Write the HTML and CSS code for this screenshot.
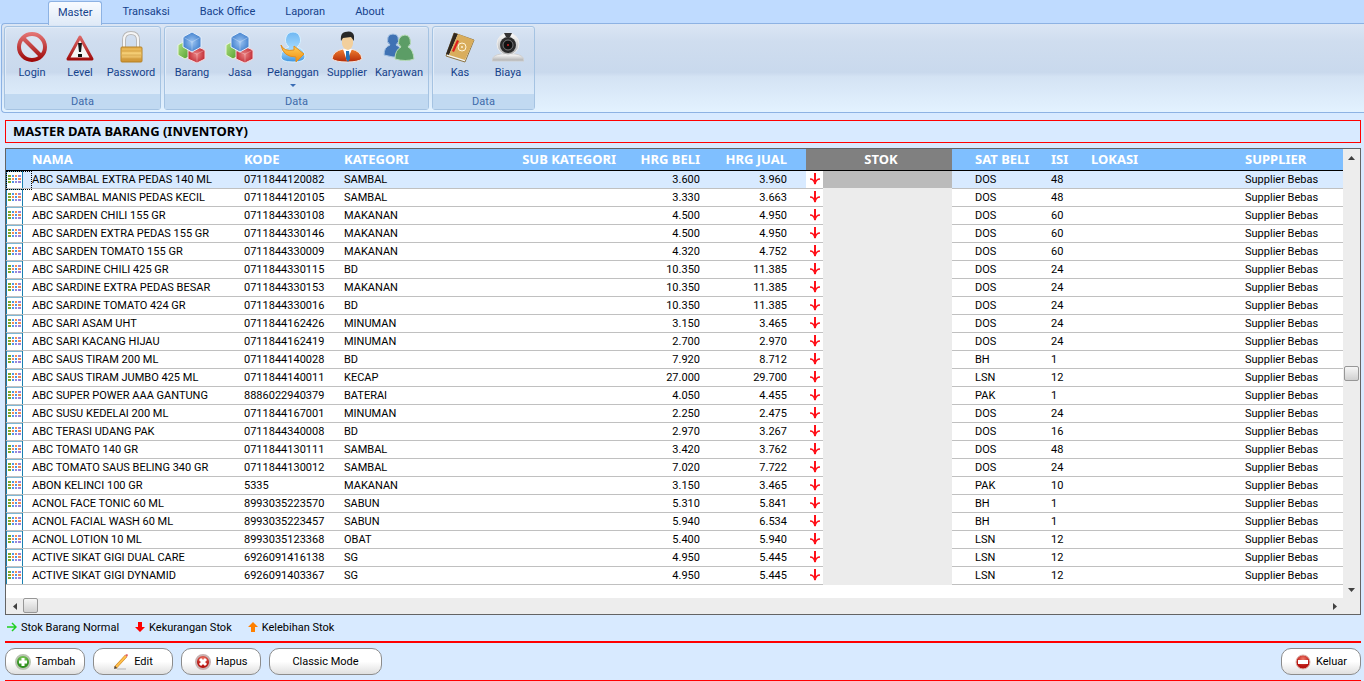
FILE: index.html
```html
<!DOCTYPE html>
<html lang="id">
  <head>
    <meta charset="utf-8">
    <meta name="viewport" content="width=device-width, initial-scale=1.0">
    <title>Master Data Barang</title>
    <link rel="stylesheet" href="styles.css">
  </head>
  <body>
    <!-- Shared icons -->
    <svg class="sprite" aria-hidden="true">
      <defs>
        <linearGradient id="red" gradientUnits="userSpaceOnUse" x1="0" y1="0" x2="0" y2="32"><stop offset="0" stop-color="#e87c7c"/><stop offset="1" stop-color="#980000"/></linearGradient>
        <linearGradient id="gold" x1="0" y1="0" x2="0" y2="1"><stop offset="0" stop-color="#e3ab45"/><stop offset=".5" stop-color="#f6d27c"/><stop offset="1" stop-color="#c98a28"/></linearGradient>
        <radialGradient id="blueHex"><stop offset="0" stop-color="#9cc4f2"/><stop offset="1" stop-color="#4583cf"/></radialGradient>
        <radialGradient id="redHex"><stop offset="0" stop-color="#ea8080"/><stop offset="1" stop-color="#c22f38"/></radialGradient>
        <linearGradient id="greenHex" x1="0" y1="0" x2="1" y2="1"><stop offset="0" stop-color="#b4e284"/><stop offset="1" stop-color="#4f9e2c"/></linearGradient>
        <linearGradient id="sky" x1="0" y1="0" x2="0" y2="1"><stop offset="0" stop-color="#6fb7f2"/><stop offset=".6" stop-color="#a5dbff"/><stop offset="1" stop-color="#3f94de"/></linearGradient>
        <linearGradient id="orange" x1="0" y1="0" x2="0" y2="1"><stop offset="0" stop-color="#ffd35a"/><stop offset="1" stop-color="#f08c10"/></linearGradient>
        <linearGradient id="shirt" x1="0" y1="0" x2="0" y2="1"><stop offset="0" stop-color="#f08030"/><stop offset="1" stop-color="#b42a08"/></linearGradient>
        <linearGradient id="silver" x1="0" y1="0" x2="0" y2="1"><stop offset="0" stop-color="#ffffff"/><stop offset="1" stop-color="#aaaaaa"/></linearGradient>
        <radialGradient id="greenBall" cy=".3"><stop offset="0" stop-color="#8bd466"/><stop offset="1" stop-color="#2d8f1c"/></radialGradient>
        <radialGradient id="redBall" cy=".3"><stop offset="0" stop-color="#f07a6a"/><stop offset="1" stop-color="#b81410"/></radialGradient>
      </defs>
      <symbol id="cubes" viewBox="0 0 32 32">
        <path d="M2 14l7-4 5 3v12l-5 3-7-4z" fill="url(#greenHex)" stroke="#e8f6dc"/>
        <path d="M20 15l9 4v9l-8 4-9-4v-9z" fill="url(#redHex)" stroke="#f4dce0"/>
        <path d="M16 1l9 5v10l-9 5-9-5V6z" fill="url(#blueHex)" stroke="#e4effc"/>
        <path d="M7 6l9 5 9-5M16 11v10M12 20l9 3 8-4M21 23v8" fill="none" stroke="#ffffff" stroke-opacity=".3"/>
      </symbol>
      <symbol id="row-icon" viewBox="0 0 17 17">
        <path d="M0 0h17v17H0z" fill="#ffffff"/>
        <path d="M0 0h1v17H0zM16 0h1v17h-1z" fill="#1a80b0"/>
        <path d="M1 0h15v1H1z" fill="#7fb8d4"/>
        <path d="M2 4h3v2H2zM2 7h3v2H2zM2 10h3v2H2z" fill="#7fa82c"/>
        <path d="M6 4h2v2H6zM9 7h2v2H9zM6 10h2v2H6z" fill="#4b97e8"/>
        <path d="M9 4h2v2H9zM6 7h2v2H6zM12 7h3v2h-3z" fill="#f58a54"/>
        <path d="M12 4h3v2h-3zM9 10h2v2H9zM12 10h3v2h-3z" fill="#9a84dc"/>
      </symbol>
      <symbol id="down" viewBox="0 0 12 12">
        <path d="M6 0v11" stroke="#ff1018" stroke-width="2"/>
        <path d="M1 6q4 0 5 5 1-5 5-5" fill="none" stroke="#ff1018" stroke-width="1.5"/>
      </symbol>
    </svg>

    <nav class="tabs">
      <a class="tab active" href="#master">Master</a>
      <a class="tab" href="#transaksi">Transaksi</a>
      <a class="tab" href="#backoffice">Back Office</a>
      <a class="tab" href="#laporan">Laporan</a>
      <a class="tab" href="#about">About</a>
    </nav>

    <div class="ribbon">
      <section class="group">
        <div class="tools">
          <button class="tool">
            <svg viewBox="0 0 32 32"><circle cx="16" cy="16" r="13" fill="#ffffff" fill-opacity=".2" stroke="url(#red)" stroke-width="4"/><path d="M7 7l18 18" stroke="url(#red)" stroke-width="4"/></svg>
            Login
          </button>
          <button class="tool">
            <svg viewBox="0 0 32 32"><path d="M16 6L28 28H4z" fill="#f4f4f4" stroke="url(#red)" stroke-width="3" stroke-linejoin="round"/><path d="M14 12h4l-1 9h-2zM14 23h4v3h-4z" fill="#111111"/></svg>
            Level
          </button>
          <button class="tool wide">
            <svg viewBox="0 0 32 32"><path d="M9 17V9q0-7 7-7t7 7v8" fill="none" stroke="#b8b8b8" stroke-width="4"/><path d="M9 17V9q0-7 7-7t7 7v8" fill="none" stroke="#f6f6f6" stroke-width="2"/><rect x="6" y="16" width="21" height="15" rx="1" fill="url(#gold)" stroke="#b88428"/><path d="M7 20h19M7 24h19M7 28h19" stroke="#c48c2c" stroke-opacity=".6"/></svg>
            Password
          </button>
        </div>
        <h2>Data</h2>
      </section>

      <section class="group">
        <div class="tools">
          <button class="tool"><svg><use href="#cubes"/></svg>Barang</button>
          <button class="tool"><svg><use href="#cubes"/></svg>Jasa</button>
          <button class="tool wider">
            <svg viewBox="0 0 32 32"><path d="M4 26q0-8 8-10-5-4-3-10 2-5 7-5t7 5q2 6-3 10 8 2 8 10 0 5-12 5T4 26z" fill="url(#sky)" stroke="#d8f0ff"/><path d="M4 14q3 7 13 5v-4l10 8-8 8v-5Q6 26 4 14z" fill="url(#orange)" stroke="#e49020"/></svg>
            Pelanggan
            <span class="caret"></span>
          </button>
          <button class="tool medium">
            <svg viewBox="0 0 32 32"><path d="M1 28q1-8 11-10h8q10 2 11 10-4 3-15 3T1 28z" fill="url(#shirt)" stroke="#f4e4dc"/><path d="M12 18l4 12 5-12z" fill="#ffffff"/><path d="M15 20h3l1 8-2 3-2-3z" fill="#2472b8"/><path d="M11 6h11v7q-1 5-5 6-5-1-6-6z" fill="#f2cf9c"/><path d="M10 10q-1-8 4-9 8-2 9 4v5l-3-4-8 1z" fill="#282828"/></svg>
            Supplier
          </button>
          <button class="tool wide">
            <svg viewBox="0 0 32 32"><path d="M1 24q0-8 6-10-4-3-2-8 1-3 5-3t5 3q2 5-2 8 6 2 6 12-9 1-18-2z" fill="#3f72b4" stroke="#a8c4e4"/><path d="M12 28q0-9 6-12-4-3-2-8 2-4 6-4t5 4q2 5-2 8 5 2 6 12-8 3-19 0z" fill="#5c9d66" stroke="#b8dcb8"/></svg>
            Karyawan
          </button>
        </div>
        <h2>Data</h2>
      </section>

      <section class="group">
        <div class="tools">
          <button class="tool">
            <svg viewBox="0 0 32 32"><path d="M10 2l20 7-9 22L2 25z" fill="#f4f4ee" stroke="#8c7444"/><path d="M10 2l4 1-9 21-3-1z" fill="#302820"/><path d="M14 3l16 6-9 20L5 24z" fill="#d9ad5c"/><path d="M13 9l2 1-5 11-2-1z" fill="#e02020"/><circle cx="18" cy="16" r="4" fill="none" stroke="#fff4d8"/><circle cx="18" cy="16" r="1" fill="#fff4d8"/></svg>
            Kas
          </button>
          <button class="tool">
            <svg viewBox="0 0 32 32"><path d="M0 30q0-6 9-7h14q9 1 9 7z" fill="url(#silver)" stroke="#d0d0d0"/><circle cx="16" cy="13" r="11" fill="url(#silver)" stroke="#eeeeee"/><path d="M12 2h8l-2 4h-4z" fill="#333333"/><circle cx="16" cy="14" r="8" fill="#2c2c2c"/><circle cx="16" cy="14" r="5" fill="#111111" stroke="#777777"/><circle cx="16" cy="14" r="1" fill="#cc2020"/></svg>
            Biaya
          </button>
        </div>
        <h2>Data</h2>
      </section>
    </div>

    <main>
      <h1>MASTER DATA BARANG (INVENTORY)</h1>

      <div class="grid">
        <div class="rows">
          <table>
            <colgroup>
              <col class="c-icon"><col class="c-nama"><col class="c-kode"><col class="c-kategori"><col class="c-sub"><col class="c-beli"><col class="c-jual"><col class="c-arrow"><col class="c-stok"><col class="c-sat"><col class="c-isi"><col class="c-lokasi"><col>
            </colgroup>
            <thead>
              <tr>
                <th></th><th>NAMA</th><th>KODE</th><th>KATEGORI</th><th class="num">SUB KATEGORI</th><th class="num">HRG BELI</th><th class="num jual">HRG JUAL</th><th class="stok" colspan="2">STOK</th><th class="sat">SAT BELI</th><th>ISI</th><th>LOKASI</th><th>SUPPLIER</th>
              </tr>
            </thead>
            <tbody>
              <tr class="selected"><td class="mark"><svg><use href="#row-icon"/></svg></td><td>ABC SAMBAL EXTRA PEDAS 140 ML</td><td>0711844120082</td><td>SAMBAL</td><td></td><td class="num">3.600</td><td class="num jual">3.960</td><td class="arrow"><svg><use href="#down"/></svg></td><td class="stok"></td><td class="sat">DOS</td><td>48</td><td></td><td>Supplier Bebas</td></tr>
              <tr><td class="mark"><svg><use href="#row-icon"/></svg></td><td>ABC SAMBAL MANIS PEDAS KECIL</td><td>0711844120105</td><td>SAMBAL</td><td></td><td class="num">3.330</td><td class="num jual">3.663</td><td class="arrow"><svg><use href="#down"/></svg></td><td class="stok"></td><td class="sat">DOS</td><td>48</td><td></td><td>Supplier Bebas</td></tr>
              <tr><td class="mark"><svg><use href="#row-icon"/></svg></td><td>ABC SARDEN CHILI 155 GR</td><td>0711844330108</td><td>MAKANAN</td><td></td><td class="num">4.500</td><td class="num jual">4.950</td><td class="arrow"><svg><use href="#down"/></svg></td><td class="stok"></td><td class="sat">DOS</td><td>60</td><td></td><td>Supplier Bebas</td></tr>
              <tr><td class="mark"><svg><use href="#row-icon"/></svg></td><td>ABC SARDEN EXTRA PEDAS 155 GR</td><td>0711844330146</td><td>MAKANAN</td><td></td><td class="num">4.500</td><td class="num jual">4.950</td><td class="arrow"><svg><use href="#down"/></svg></td><td class="stok"></td><td class="sat">DOS</td><td>60</td><td></td><td>Supplier Bebas</td></tr>
              <tr><td class="mark"><svg><use href="#row-icon"/></svg></td><td>ABC SARDEN TOMATO 155 GR</td><td>0711844330009</td><td>MAKANAN</td><td></td><td class="num">4.320</td><td class="num jual">4.752</td><td class="arrow"><svg><use href="#down"/></svg></td><td class="stok"></td><td class="sat">DOS</td><td>60</td><td></td><td>Supplier Bebas</td></tr>
              <tr><td class="mark"><svg><use href="#row-icon"/></svg></td><td>ABC SARDINE CHILI 425 GR</td><td>0711844330115</td><td>BD</td><td></td><td class="num">10.350</td><td class="num jual">11.385</td><td class="arrow"><svg><use href="#down"/></svg></td><td class="stok"></td><td class="sat">DOS</td><td>24</td><td></td><td>Supplier Bebas</td></tr>
              <tr><td class="mark"><svg><use href="#row-icon"/></svg></td><td>ABC SARDINE EXTRA PEDAS BESAR</td><td>0711844330153</td><td>MAKANAN</td><td></td><td class="num">10.350</td><td class="num jual">11.385</td><td class="arrow"><svg><use href="#down"/></svg></td><td class="stok"></td><td class="sat">DOS</td><td>24</td><td></td><td>Supplier Bebas</td></tr>
              <tr><td class="mark"><svg><use href="#row-icon"/></svg></td><td>ABC SARDINE TOMATO 424 GR</td><td>0711844330016</td><td>BD</td><td></td><td class="num">10.350</td><td class="num jual">11.385</td><td class="arrow"><svg><use href="#down"/></svg></td><td class="stok"></td><td class="sat">DOS</td><td>24</td><td></td><td>Supplier Bebas</td></tr>
              <tr><td class="mark"><svg><use href="#row-icon"/></svg></td><td>ABC SARI ASAM UHT</td><td>0711844162426</td><td>MINUMAN</td><td></td><td class="num">3.150</td><td class="num jual">3.465</td><td class="arrow"><svg><use href="#down"/></svg></td><td class="stok"></td><td class="sat">DOS</td><td>24</td><td></td><td>Supplier Bebas</td></tr>
              <tr><td class="mark"><svg><use href="#row-icon"/></svg></td><td>ABC SARI KACANG HIJAU</td><td>0711844162419</td><td>MINUMAN</td><td></td><td class="num">2.700</td><td class="num jual">2.970</td><td class="arrow"><svg><use href="#down"/></svg></td><td class="stok"></td><td class="sat">DOS</td><td>24</td><td></td><td>Supplier Bebas</td></tr>
              <tr><td class="mark"><svg><use href="#row-icon"/></svg></td><td>ABC SAUS TIRAM 200 ML</td><td>0711844140028</td><td>BD</td><td></td><td class="num">7.920</td><td class="num jual">8.712</td><td class="arrow"><svg><use href="#down"/></svg></td><td class="stok"></td><td class="sat">BH</td><td>1</td><td></td><td>Supplier Bebas</td></tr>
              <tr><td class="mark"><svg><use href="#row-icon"/></svg></td><td>ABC SAUS TIRAM JUMBO 425 ML</td><td>0711844140011</td><td>KECAP</td><td></td><td class="num">27.000</td><td class="num jual">29.700</td><td class="arrow"><svg><use href="#down"/></svg></td><td class="stok"></td><td class="sat">LSN</td><td>12</td><td></td><td>Supplier Bebas</td></tr>
              <tr><td class="mark"><svg><use href="#row-icon"/></svg></td><td>ABC SUPER POWER AAA GANTUNG</td><td>8886022940379</td><td>BATERAI</td><td></td><td class="num">4.050</td><td class="num jual">4.455</td><td class="arrow"><svg><use href="#down"/></svg></td><td class="stok"></td><td class="sat">PAK</td><td>1</td><td></td><td>Supplier Bebas</td></tr>
              <tr><td class="mark"><svg><use href="#row-icon"/></svg></td><td>ABC SUSU KEDELAI 200 ML</td><td>0711844167001</td><td>MINUMAN</td><td></td><td class="num">2.250</td><td class="num jual">2.475</td><td class="arrow"><svg><use href="#down"/></svg></td><td class="stok"></td><td class="sat">DOS</td><td>24</td><td></td><td>Supplier Bebas</td></tr>
              <tr><td class="mark"><svg><use href="#row-icon"/></svg></td><td>ABC TERASI UDANG PAK</td><td>0711844340008</td><td>BD</td><td></td><td class="num">2.970</td><td class="num jual">3.267</td><td class="arrow"><svg><use href="#down"/></svg></td><td class="stok"></td><td class="sat">DOS</td><td>16</td><td></td><td>Supplier Bebas</td></tr>
              <tr><td class="mark"><svg><use href="#row-icon"/></svg></td><td>ABC TOMATO 140 GR</td><td>0711844130111</td><td>SAMBAL</td><td></td><td class="num">3.420</td><td class="num jual">3.762</td><td class="arrow"><svg><use href="#down"/></svg></td><td class="stok"></td><td class="sat">DOS</td><td>48</td><td></td><td>Supplier Bebas</td></tr>
              <tr><td class="mark"><svg><use href="#row-icon"/></svg></td><td>ABC TOMATO SAUS BELING 340 GR</td><td>0711844130012</td><td>SAMBAL</td><td></td><td class="num">7.020</td><td class="num jual">7.722</td><td class="arrow"><svg><use href="#down"/></svg></td><td class="stok"></td><td class="sat">DOS</td><td>24</td><td></td><td>Supplier Bebas</td></tr>
              <tr><td class="mark"><svg><use href="#row-icon"/></svg></td><td>ABON KELINCI 100 GR</td><td>5335</td><td>MAKANAN</td><td></td><td class="num">3.150</td><td class="num jual">3.465</td><td class="arrow"><svg><use href="#down"/></svg></td><td class="stok"></td><td class="sat">PAK</td><td>10</td><td></td><td>Supplier Bebas</td></tr>
              <tr><td class="mark"><svg><use href="#row-icon"/></svg></td><td>ACNOL FACE TONIC 60 ML</td><td>8993035223570</td><td>SABUN</td><td></td><td class="num">5.310</td><td class="num jual">5.841</td><td class="arrow"><svg><use href="#down"/></svg></td><td class="stok"></td><td class="sat">BH</td><td>1</td><td></td><td>Supplier Bebas</td></tr>
              <tr><td class="mark"><svg><use href="#row-icon"/></svg></td><td>ACNOL FACIAL WASH 60 ML</td><td>8993035223457</td><td>SABUN</td><td></td><td class="num">5.940</td><td class="num jual">6.534</td><td class="arrow"><svg><use href="#down"/></svg></td><td class="stok"></td><td class="sat">BH</td><td>1</td><td></td><td>Supplier Bebas</td></tr>
              <tr><td class="mark"><svg><use href="#row-icon"/></svg></td><td>ACNOL LOTION 10 ML</td><td>8993035123368</td><td>OBAT</td><td></td><td class="num">5.400</td><td class="num jual">5.940</td><td class="arrow"><svg><use href="#down"/></svg></td><td class="stok"></td><td class="sat">LSN</td><td>12</td><td></td><td>Supplier Bebas</td></tr>
              <tr><td class="mark"><svg><use href="#row-icon"/></svg></td><td>ACTIVE SIKAT GIGI DUAL CARE</td><td>6926091416138</td><td>SG</td><td></td><td class="num">4.950</td><td class="num jual">5.445</td><td class="arrow"><svg><use href="#down"/></svg></td><td class="stok"></td><td class="sat">LSN</td><td>12</td><td></td><td>Supplier Bebas</td></tr>
              <tr><td class="mark"><svg><use href="#row-icon"/></svg></td><td>ACTIVE SIKAT GIGI DYNAMID</td><td>6926091403367</td><td>SG</td><td></td><td class="num">4.950</td><td class="num jual">5.445</td><td class="arrow"><svg><use href="#down"/></svg></td><td class="stok"></td><td class="sat">LSN</td><td>12</td><td></td><td>Supplier Bebas</td></tr>
            </tbody>
          </table>
        </div>
        <div class="vbar">
          <button class="step" aria-label="Scroll up"><svg viewBox="0 0 7 4"><path d="M0 4l3.5-4L7 4z"/></svg></button>
          <div class="vtrack"><span class="thumb"></span></div>
          <button class="step" aria-label="Scroll down"><svg viewBox="0 0 7 4"><path d="M0 0l3.5 4L7 0z"/></svg></button>
        </div>
        <div class="hbar">
          <button class="step" aria-label="Scroll left"><svg class="side" viewBox="0 0 4 7"><path d="M4 0L0 3.5 4 7z"/></svg></button>
          <div class="htrack"><span class="thumb"></span></div>
          <button class="step" aria-label="Scroll right"><svg class="side" viewBox="0 0 4 7"><path d="M0 0l4 3.5L0 7z"/></svg></button>
        </div>
        <div class="corner"></div>
      </div>

      <ul class="legend">
        <li><svg viewBox="0 0 10 10"><path d="M0 5h9M5 1l4 4-4 4" fill="none" stroke="#20d020" stroke-width="1.5"/></svg>Stok Barang Normal</li>
        <li><svg viewBox="0 0 10 10"><path d="M3 0h4v5h3l-5 5-5-5h3z" fill="#ff0000"/></svg>Kekurangan Stok</li>
        <li><svg viewBox="0 0 10 10"><path d="M3 10h4V5h3L5 0 0 5h3z" fill="#ff8000"/></svg>Kelebihan Stok</li>
      </ul>

      <div class="actions">
        <button class="btn"><svg viewBox="0 0 16 16"><circle cx="8" cy="8" r="7" fill="url(#greenBall)" stroke="#b8c4b0" stroke-width="2"/><path d="M8 4v8M4 8h8" stroke="#ffffff" stroke-width="3"/></svg>Tambah</button>
        <button class="btn"><svg viewBox="0 0 16 16"><path d="M4 15h9" stroke="#d0d0d0" stroke-width="2"/><path d="M2 14L13 2" stroke="#c47818" stroke-width="3"/><path d="M3 13L13 2" stroke="#ffc04c" stroke-width="2"/><path d="M12 1l2-1 1 1-1 2z" fill="#e06060"/><path d="M1 15l1-3 2 2z" fill="#444444"/></svg>Edit</button>
        <button class="btn"><svg viewBox="0 0 16 16"><circle cx="8" cy="8" r="7" fill="url(#redBall)" stroke="#c8b0b0" stroke-width="2"/><path d="M5 5l6 6M11 5l-6 6" stroke="#ffffff" stroke-width="3"/></svg>Hapus</button>
        <button class="btn classic">Classic Mode</button>
        <button class="btn"><svg viewBox="0 0 16 16"><circle cx="8" cy="8" r="7" fill="url(#redBall)" stroke="#dcb8b0"/><path d="M3 8h10" stroke="#ffffff" stroke-width="4"/></svg>Keluar</button>
      </div>
    </main>
  </body>
</html>
```
FILE: styles.css
```css
* {
  box-sizing: border-box;
}

body {
  margin: 0;
  min-height: 100vh;
  display: flex;
  flex-direction: column;
  background-color: #d8eaff;
  font-family: Roboto, "Liberation Sans", sans-serif;
  font-size: 11px;
  color: #000;
}

button {
  font: inherit;
  cursor: pointer;
}

.sprite {
  width: 0;
  height: 0;
}

/* Ribbon tabs */
.tabs {
  display: flex;
  gap: 10px;
  height: 24px;
  padding: 1px 48px 0;
  background-color: #bfdbff;
}

.tab {
  padding: 0 10px;
  line-height: 22px;
  color: #15428b;
  text-decoration: none;
}

.tab.active {
  z-index: 1;
  height: 24px;
  padding: 0 9px;
  border: 1px solid #8db2e3;
  border-bottom: none;
  border-radius: 3px 3px 0 0;
  background: linear-gradient(#f8fbff, #dfeaf7);
}

/* Ribbon */
.ribbon {
  display: flex;
  gap: 3px;
  height: 90px;
  margin: -1px 0 0 1px;
  padding: 2px;
  border: 1px solid #8db2e3;
  border-right: none;
  border-radius: 4px 0 0 4px;
  background: linear-gradient(#dbe6f4, #cfddef 20%, #c9d9ed 55%, #d4e3f4 60%, #e3f2ff);
}

.group {
  display: flex;
  flex-direction: column;
  border: 1px solid #a5c3e2;
  border-radius: 3px;
  box-shadow: inset 1px 1px 0 #e2ecf8;
}

.tools {
  display: flex;
  flex: 1;
  padding: 0 2px 0 3px;
}

.tool {
  display: flex;
  flex-direction: column;
  align-items: center;
  width: 48px;
  padding: 4px 0 0;
  border: none;
  background: none;
  color: #15428b;
  line-height: 16px;
}

.tool svg {
  width: 32px;
  height: 32px;
  margin-bottom: 2px;
}

.medium {
  width: 50px;
}

.wide {
  width: 54px;
}

.wider {
  width: 58px;
}

.caret {
  margin-top: 3px;
  border: 3px solid transparent;
  border-top-color: #3a6db5;
  border-bottom: none;
}

.group h2 {
  margin: 0;
  background-color: #c1d9f1;
  color: #3e6aaa;
  font-size: 11px;
  font-weight: normal;
  line-height: 15px;
  text-align: center;
}

/* Content */
main {
  display: flex;
  flex: 1;
  flex-direction: column;
  padding: 7px 3px 0 5px;
}

h1 {
  margin: 0 0 5px;
  padding: 0 7px;
  border: 1px solid #ff0000;
  font-family: "Noto Sans", sans-serif;
  font-size: 13px;
  font-weight: bold;
  line-height: 21px;
}

.grid {
  display: grid;
  flex: 1;
  grid-template-columns: 1fr 17px;
  grid-template-rows: 1fr 16px;
  border: 1px solid #646464;
  background-color: #fff;
}

table {
  width: 100%;
  table-layout: fixed;
  border-collapse: collapse;
}

.c-icon { width: 17px; }
.c-nama { width: 212px; }
.c-kode { width: 100px; }
.c-kategori { width: 180px; }
.c-sub { width: 110px; }
.c-beli { width: 84px; }
.c-jual { width: 97px; }
.c-arrow { width: 17px; }
.c-stok { width: 129px; }
.c-sat { width: 90px; }
.c-isi { width: 40px; }
.c-lokasi { width: 154px; }

th, td {
  padding: 0 0 0 9px;
  text-align: left;
  white-space: nowrap;
}

th {
  height: 21px;
  border-bottom: 1px solid #000;
  background-color: #7fbfff;
  color: #fff;
  font-family: "Noto Sans", sans-serif;
  font-size: 13px;
  line-height: 20px;
}

td {
  height: 18px;
  border-bottom: 1px solid #c0c0c0;
  line-height: 17px;
}

.num {
  padding: 0 9px 0 0;
  text-align: right;
}

.jual {
  padding-right: 19px;
}

.sat {
  padding-left: 23px;
}

th.stok {
  padding: 0 0 0 4px;
  background-color: #808080;
  text-align: center;
}

td.stok {
  border-bottom-color: #ececec;
  background-color: #ececec;
}

.mark, .arrow {
  padding: 0;
}

.arrow {
  background-color: #fff;
}

.mark svg {
  display: block;
  width: 17px;
  height: 17px;
}

.arrow svg {
  display: block;
  width: 12px;
  height: 12px;
  margin: 0 auto;
}

.selected {
  background-color: #d8eaff;
}

.selected td.stok {
  background-color: #bbb;
}

/* Focus rectangle on the current row */
.selected .mark {
  position: relative;
}

.selected .mark::after {
  content: "";
  position: absolute;
  top: 0;
  left: 0;
  width: 24px;
  height: 17px;
  border: 1px dotted #000;
}

/* Scrollbars */
.vbar, .hbar, .corner {
  display: flex;
  background-color: #ededed;
}

.vbar {
  flex-direction: column;
}

.vtrack, .htrack {
  display: flex;
  flex: 1;
}

.vtrack {
  padding-top: 200px;
  justify-content: center;
}

.thumb {
  width: 15px;
  height: 15px;
  border: 1px solid #979797;
  border-radius: 2px;
  background: linear-gradient(#f6f6f6, #d0d0d0);
}

.step {
  display: flex;
  align-items: center;
  justify-content: center;
  width: 17px;
  height: 17px;
  padding: 0;
  border: none;
  background: none;
}

.step svg {
  width: 7px;
  height: 4px;
  fill: #404040;
}

.step .side {
  width: 4px;
  height: 7px;
}

/* Legend and buttons */
.legend {
  display: flex;
  gap: 16px;
  height: 26px;
  margin: 0;
  padding: 0 2px 2px;
  list-style: none;
}

.legend li {
  display: flex;
  align-items: center;
  gap: 4px;
}

.legend svg {
  width: 10px;
  height: 10px;
}

.actions {
  display: flex;
  gap: 8px;
  padding: 5px 0;
  border-top: 2px solid #ff0000;
  border-bottom: 1px solid #ff0000;
}

.btn {
  display: flex;
  align-items: center;
  justify-content: center;
  gap: 5px;
  width: 80px;
  height: 27px;
  padding: 0;
  border: 1px solid #8c8c8c;
  border-radius: 10px;
  background: linear-gradient(#fff 50%, #e0e0e0);
}

.btn svg {
  width: 16px;
  height: 16px;
}

.classic {
  width: 113px;
}

.btn:last-child {
  margin-left: auto;
}
```
